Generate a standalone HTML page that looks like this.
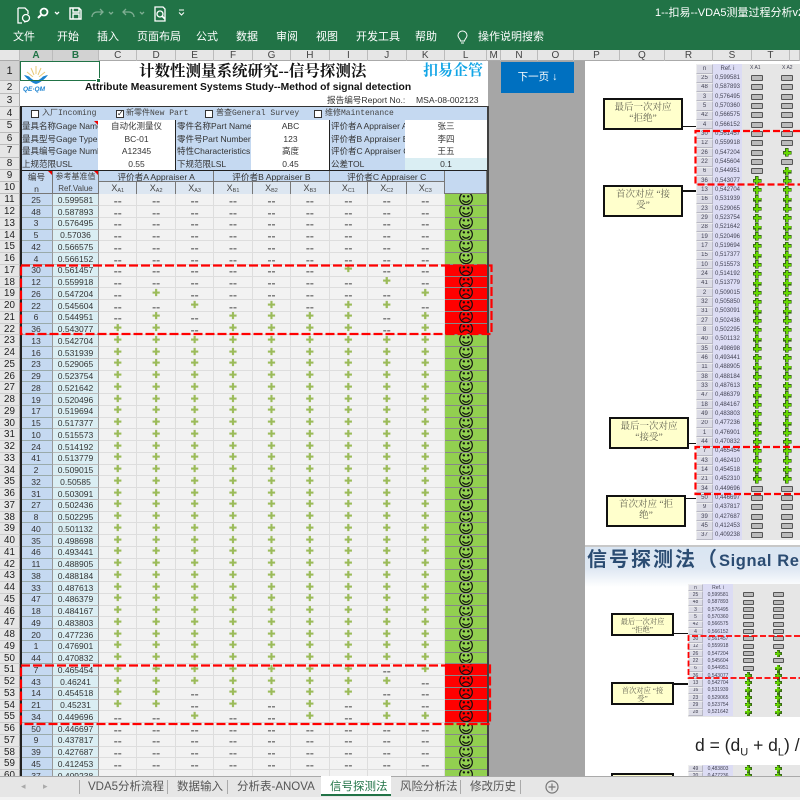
<!DOCTYPE html>
<html lang="zh"><head><meta charset="utf-8"><title>VDA5</title>
<style>
*{box-sizing:border-box;margin:0;padding:0}
html,body{width:800px;height:800px;overflow:hidden;background:#f3f3f3;font-family:"Liberation Sans","Noto Sans CJK SC",sans-serif;color:#333}
.a{position:absolute;white-space:nowrap}
.rb{left:0;top:0;width:800px;height:50px;background:#217346}
.m{top:30px;color:#fff;font-size:11px;line-height:14px}
.ch{left:0;top:50px;width:800px;height:11px;background:#e6e6e6;display:grid;grid-template-columns:20px 33px 46px repeat(9,38.44px) 42.5px 13.5px 37px 36px 46px 45px 48px 39px 38px 10px;border-bottom:1px solid #aaa}
.ch span{font-size:10px;line-height:11px;text-align:center;border-right:1px solid #bbb;color:#444}
.ch .on{background:#d2d2d2;color:#217346;font-weight:bold}
.rh{left:0;width:20px;background:#e6e6e6;border-bottom:1px solid #bbb;border-right:1px solid #aaa;text-align:center;font-size:10px;color:#222;display:flex;align-items:center;justify-content:center}
.d{left:0;top:194.4px;width:488px;height:581.6px;overflow:hidden;display:grid;grid-template-columns:20px 33px 46px repeat(9,38.44px) 42px;grid-auto-rows:11.75px}
.d>*{display:flex;align-items:center;justify-content:center;overflow:hidden;font-style:normal;text-decoration:none;font-weight:normal}
.d s{background:#e6e6e6;border-bottom:1px solid #ccc;border-right:1px solid #aaa;font-size:9.8px;color:#222}
.d u{background:#c5d9f1;border-bottom:1px solid #9aa;border-right:1px solid #999;font-size:8.6px}
.d b{background:#daeef3;border-bottom:1px solid #bbb;border-right:1px solid #999;font-size:8.5px}
.d i,.d em{background:#f2f2f2;border-bottom:1px solid #ddd;border-right:1px solid #ddd}
.d i{font-weight:bold;font-size:12px;color:#7a7a7a;padding-top:2px}
.d em{font-size:9.5px;color:#9bbb59;padding-bottom:1px;font-family:"DejaVu Sans",sans-serif;-webkit-text-stroke:.3px #9bbb59}
.d tt,.d big{font-family:"DejaVu Sans",sans-serif;font-size:15.5px;color:#111;border-bottom:1px solid #888;line-height:11px;-webkit-text-stroke:.2px #111}
.d tt{background:#92d050}.d big{background:#f00}
.sec{font-size:8.5px;line-height:12px;color:#333}
.lb{background:#c5d9f1;height:12.5px;overflow:hidden}
.ck{width:8px;height:8px;background:#fff;border:1px solid #333;top:110px}
.ct{top:108px;font:8px/11px "Liberation Mono","Noto Sans CJK SC",monospace;color:#444}
.hd{background:#c5d9f1;font-size:8.6px;text-align:center;line-height:12px;border-right:1px solid #777;border-bottom:1px solid #777}
.x{background:#dce6f1;top:182px;height:12.4px;width:38.44px;border-right:1px solid #777;text-align:center;font-size:9px;line-height:12px;color:#444}
.x sub{font-size:5.5px;vertical-align:-1px;line-height:0}
.tri{width:0;height:0;border-top:4px solid #e00;border-left:4px solid transparent}
.tb{display:grid;overflow:hidden;background:#e6e6e6;filter:blur(.35px)}
.tb>*{display:flex;align-items:center;justify-content:center;overflow:hidden;font-style:normal;text-decoration:none;font-weight:normal;color:#445}
.tb s{background:#dcdce6;border:1px solid #b8b8c4;border-left-color:#eee;border-top-color:#eee}
.tb u{background:#dcdcf4}
.tb i::after{content:"";display:block;background:#bbb;border:1px solid #555;border-radius:1px}
.t1{left:696px;top:64px;width:104px;height:476px;grid-template-columns:17px 29px 30px 30px;grid-template-rows:9.5px;grid-auto-rows:9.33px;font-size:6px}
.t1>*{font-size:6px}.t1 i::after{width:10px;height:4px}
.t1 em{background:linear-gradient(#66d800,#66d800) center/2px 7px no-repeat,linear-gradient(#66d800,#66d800) center/7px 2px no-repeat,linear-gradient(#3a6a18,#3a6a18) center/3.6px 8.6px no-repeat,linear-gradient(#3a6a18,#3a6a18) center/8.6px 3.6px no-repeat}
.t2,.t3{left:688px;width:112px;grid-template-columns:15px 30px 30px 30px;grid-auto-rows:7.33px}
.t2{top:584px;height:133px;grid-template-rows:7.3px}
.t3{top:765px;height:11px}
.t2>*,.t3>*{font-size:5px}.t2 i::after{width:9px;height:3px}
.t2 em,.t3 em{background:linear-gradient(#66d800,#66d800) center/1.6px 5.6px no-repeat,linear-gradient(#66d800,#66d800) center/5.6px 1.6px no-repeat,linear-gradient(#3a6a18,#3a6a18) center/3px 7px no-repeat,linear-gradient(#3a6a18,#3a6a18) center/7px 3px no-repeat}
.cb{background:#ffffcc;border:2px solid #111;text-align:center;font-family:"Liberation Serif","Noto Serif CJK SC",serif;color:#665;white-space:normal;filter:blur(.25px)}
.cb1{font-size:9.5px;line-height:11px;padding:3px 4px;width:80px;height:32px}
.cb2{font-size:7.3px;line-height:7.5px;padding:3px 2px;width:63px;height:23px}
.ln{background:#111;height:1.5px}
.tab{top:779px;font-size:11.5px;line-height:16px;color:#555}
.sp{top:780px;width:1px;height:14px;background:#aaa}
</style></head><body>

<div class="a rb"></div>
<svg class="a" style="left:0;top:0" width="200" height="28" fill="none" stroke="#fff" stroke-width="1.3">
<path d="M18 8h7l3 3v3M18 8v15h4"/><circle cx="26" cy="18" r="3.5"/><path d="M24 22l4-1"/>
<circle cx="44" cy="12" r="3.5" stroke-width="1.8"/><path d="M41 15l-3 3" stroke-width="2"/><path d="M55 12l2 2 2-2"/>
<path d="M70 8h9l2 2v9H70zM73 8v4h6V8M73 19v-5h6v5" stroke-width="1.4"/>
<g stroke="#7fae93"><path d="M92 17a5 5 0 0 1 5-5h6M100 9l3 3-3 3"/><path d="M134 17a5 5 0 0 0-5-5h-6M126 9l-3 3 3 3"/><path d="M109 12l2 2 2-2M140 12l2 2 2-2"/></g>
<path d="M155 7h8l2 2v12h-10z"/><circle cx="160" cy="14" r="3"/><path d="M162 16l3 3" stroke-width="1.6"/>
<path d="M179 10h5M179 12.500l2.500 2.500 2.500-2.500" stroke-width="1"/>
</svg>
<div class="a" style="left:655px;top:6px;width:145px;overflow:hidden;color:#fff;font-size:11px;line-height:14px">1--扣易--VDA5测量过程分析v2.4.x</div>
<div class="a m" style="left:13px">文件</div><div class="a m" style="left:57px">开始</div><div class="a m" style="left:97px">插入</div><div class="a m" style="left:137px">页面布局</div><div class="a m" style="left:196px">公式</div><div class="a m" style="left:236px">数据</div><div class="a m" style="left:276px">审阅</div><div class="a m" style="left:316px">视图</div><div class="a m" style="left:356px">开发工具</div><div class="a m" style="left:415px">帮助</div>
<svg class="a" style="left:456px;top:30px" width="13" height="15" fill="none" stroke="#fff"><path d="M4.500 11c0-2-2.500-3-2.500-5.500a4.500 4.500 0 0 1 9 0c0 2.500-2.500 3.500-2.500 5.500zM5 13h3"/></svg>
<div class="a m" style="left:478px">操作说明搜索</div>

<div class="a ch"><span></span><span class="on">A</span><span class="on">B</span><span>C</span><span>D</span><span>E</span><span>F</span><span>G</span><span>H</span><span>I</span><span>J</span><span>K</span><span>L</span><span>M</span><span>N</span><span>O</span><span>P</span><span>Q</span><span>R</span><span>S</span><span>T</span><span></span></div>

<div class="a" style="left:20px;top:61px;width:468px;height:46px;background:#fff"></div>
<div class="a" style="left:488px;top:61px;width:97px;height:715px;background:#a6a6a6"></div>
<div class="a" style="left:585px;top:61px;width:215px;height:715px;background:#fff"></div>

<div class="a rh" style="top:61px;height:20px;background:#d2d2d2;font-size:11px">1</div>
<div class="a rh" style="top:81px;height:13px">2</div><div class="a rh" style="top:94px;height:13px">3</div><div class="a rh" style="top:107px;height:13px">4</div><div class="a rh" style="top:120px;height:12.500px">5</div><div class="a rh" style="top:132.500px;height:12.500px">6</div><div class="a rh" style="top:145px;height:12.500px">7</div><div class="a rh" style="top:157.500px;height:12.500px">8</div><div class="a rh" style="top:170px;height:12px">9</div><div class="a rh" style="top:182px;height:12.400px">10</div>

<svg class="a" style="left:22px;top:63px" width="30" height="30" fill="none">
<path d="M14 3v8M9 5l3 7M19 5l-3 7M5 9l6 5M23 9l-6 5" stroke="#e8c878" stroke-width="1"/>
<path d="M2 12c5 1 9 3 12 6 3-3 7-5 12-6-3 4-8 8-12 9-4-1-9-5-12-9z" fill="#1b82d0"/>
<path d="M6 12c4 1 6 3 8 5 2-2 4-4 8-5-2 3-5 5-8 6-3-1-6-3-8-6z" fill="#fff"/>
<text x="1" y="28" font-family="Liberation Sans" font-weight="bold" font-style="italic" font-size="6.500" fill="#1b82d0">QE·QM</text>
</svg>
<div class="a" style="left:19.500px;top:60.500px;width:80px;height:20.500px;border:1.500px solid #217346"></div>
<div class="a" style="left:96px;top:78px;width:5px;height:5px;background:#217346;border:1px solid #fff"></div>

<div class="a" style="left:139px;top:60px;font:bold 15.500px/24px 'Liberation Serif','Noto Serif CJK SC',serif;color:#111">计数性测量系统研究--信号探测法</div>
<div class="a" style="left:85px;top:81px;font-weight:bold;font-size:10.300px;line-height:13px;color:#111">Attribute Measurement Systems Study--Method of signal detection</div>
<div class="a" style="left:423px;top:60px;font:bold 15px/22px 'Liberation Serif','Noto Serif CJK SC',serif;color:#12a5e6">扣易企管</div>
<div class="a" style="left:327px;top:94px;font-size:8.600px;line-height:13px">报告编号Report No.:</div>
<div class="a" style="left:416px;top:94px;font-size:8.600px;line-height:13px">MSA-08-002123</div>

<div class="a" style="left:20px;top:106px;width:468px;height:14.500px;background:#c5d9f1;border-top:1.500px solid #333;border-bottom:1.500px solid #222"></div>
<div class="a ck" style="left:31px"></div><div class="a ct" style="left:42px">入厂Incoming</div>
<div class="a ck" style="left:116px;font:bold 8px/6px 'DejaVu Sans';color:#111;text-align:center">✓</div><div class="a ct" style="left:126px">新零件New Part</div>
<div class="a ck" style="left:205px"></div><div class="a ct" style="left:216px">普查General Survey</div>
<div class="a ck" style="left:314px"></div><div class="a ct" style="left:325px">维修Maintenance</div>

<div class="a" style="left:21px;top:120px;width:466px;height:50px;background:#fff"></div>
<div class="a lb sec" style="left:21px;top:120px;width:77px;padding-left:1px">量具名称Gage Name</div>
<div class="a lb sec" style="left:21px;top:132.500px;width:77px;padding-left:1px">量具型号Gage Type</div>
<div class="a lb sec" style="left:21px;top:145px;width:77px;padding-left:1px">量具编号Gage Number</div>
<div class="a lb sec" style="left:21px;top:157.500px;width:77px;padding-left:1px">上规范限USL</div>
<div class="a sec" style="left:98px;top:120px;width:77px;text-align:center">自动化测量仪</div>
<div class="a sec" style="left:98px;top:132.500px;width:77px;text-align:center">BC-01</div>
<div class="a sec" style="left:98px;top:145px;width:77px;text-align:center">A12345</div>
<div class="a sec" style="left:98px;top:157.500px;width:77px;text-align:center">0.55</div>
<div class="a lb sec" style="left:176px;top:120px;width:75px;padding-left:1px">零件名称Part Name</div>
<div class="a lb sec" style="left:176px;top:132.500px;width:75px;padding-left:1px">零件号Part Number:</div>
<div class="a lb sec" style="left:176px;top:145px;width:75px;padding-left:1px">特性Characteristics</div>
<div class="a lb sec" style="left:176px;top:157.500px;width:75px;padding-left:1px">下规范限LSL</div>
<div class="a sec" style="left:252px;top:120px;width:77px;text-align:center">ABC</div>
<div class="a sec" style="left:252px;top:132.500px;width:77px;text-align:center">123</div>
<div class="a sec" style="left:252px;top:145px;width:77px;text-align:center">高度</div>
<div class="a sec" style="left:252px;top:157.500px;width:77px;text-align:center">0.45</div>
<div class="a lb sec" style="left:330px;top:120px;width:75px;padding-left:1px">评价者A Appraiser A</div>
<div class="a lb sec" style="left:330px;top:132.500px;width:75px;padding-left:1px">评价者B Appraiser B</div>
<div class="a lb sec" style="left:330px;top:145px;width:75px;padding-left:1px">评价者C Appraiser C</div>
<div class="a lb sec" style="left:330px;top:157.500px;width:75px;padding-left:1px">公差TOL</div>
<div class="a sec" style="left:405px;top:120px;width:82px;text-align:center">张三</div>
<div class="a sec" style="left:405px;top:132.500px;width:82px;text-align:center">李四</div>
<div class="a sec" style="left:405px;top:145px;width:82px;text-align:center">王五</div>
<div class="a sec" style="left:405px;top:157.500px;width:82px;height:12.500px;text-align:center;background:#daeef3">0.1</div>
<div class="a" style="left:175px;top:120px;width:1px;height:50px;background:#222"></div>
<div class="a" style="left:329px;top:120px;width:1px;height:50px;background:#222"></div>
<div class="a" style="left:20px;top:169.500px;width:468px;height:1.500px;background:#222"></div>

<div class="a hd" style="left:21px;top:171px;width:32px;height:23.400px">编号<br>n</div>
<div class="a hd" style="left:53px;top:171px;width:46px;height:23.400px;font-size:8px;color:#444">参考基准值<br>Ref.Value</div>
<div class="a hd" style="left:99px;top:171px;width:115.300px;height:11px">评价者A Appraiser A</div>
<div class="a hd" style="left:214.300px;top:171px;width:115.300px;height:11px">评价者B Appraiser B</div>
<div class="a hd" style="left:329.600px;top:171px;width:115.300px;height:11px">评价者C Appraiser C</div>
<div class="a hd" style="left:445px;top:171px;width:42px;height:23.400px"></div>
<div class="a x" style="left:99px">X<sub>A1</sub></div><div class="a x" style="left:137.440px">X<sub>A2</sub></div><div class="a x" style="left:175.880px">X<sub>A3</sub></div><div class="a x" style="left:214.320px">X<sub>B1</sub></div><div class="a x" style="left:252.760px">X<sub>B2</sub></div><div class="a x" style="left:291.200px">X<sub>B3</sub></div><div class="a x" style="left:329.640px">X<sub>C1</sub></div><div class="a x" style="left:368.080px">X<sub>C2</sub></div><div class="a x" style="left:406.520px">X<sub>C3</sub></div>
<div class="a tri" style="left:94px;top:121px"></div><div class="a tri" style="left:48px;top:171px"></div><div class="a tri" style="left:94px;top:171px"></div>

<div class="a d">
<s>11</s><u>25</u><b>0.599581</b><i>--</i><i>--</i><i>--</i><i>--</i><i>--</i><i>--</i><i>--</i><i>--</i><i>--</i><tt>☺</tt>
<s>12</s><u>48</u><b>0.587893</b><i>--</i><i>--</i><i>--</i><i>--</i><i>--</i><i>--</i><i>--</i><i>--</i><i>--</i><tt>☺</tt>
<s>13</s><u>3</u><b>0.576495</b><i>--</i><i>--</i><i>--</i><i>--</i><i>--</i><i>--</i><i>--</i><i>--</i><i>--</i><tt>☺</tt>
<s>14</s><u>5</u><b>0.57036</b><i>--</i><i>--</i><i>--</i><i>--</i><i>--</i><i>--</i><i>--</i><i>--</i><i>--</i><tt>☺</tt>
<s>15</s><u>42</u><b>0.566575</b><i>--</i><i>--</i><i>--</i><i>--</i><i>--</i><i>--</i><i>--</i><i>--</i><i>--</i><tt>☺</tt>
<s>16</s><u>4</u><b>0.566152</b><i>--</i><i>--</i><i>--</i><i>--</i><i>--</i><i>--</i><i>--</i><i>--</i><i>--</i><tt>☺</tt>
<s>17</s><u>30</u><b>0.561457</b><i>--</i><i>--</i><i>--</i><i>--</i><i>--</i><i>--</i><em>✚</em><i>--</i><i>--</i><big>☹</big>
<s>18</s><u>12</u><b>0.559918</b><i>--</i><i>--</i><i>--</i><i>--</i><i>--</i><i>--</i><i>--</i><em>✚</em><i>--</i><big>☹</big>
<s>19</s><u>26</u><b>0.547204</b><i>--</i><em>✚</em><i>--</i><i>--</i><i>--</i><i>--</i><i>--</i><i>--</i><em>✚</em><big>☹</big>
<s>20</s><u>22</u><b>0.545604</b><i>--</i><i>--</i><em>✚</em><i>--</i><em>✚</em><i>--</i><em>✚</em><em>✚</em><i>--</i><big>☹</big>
<s>21</s><u>6</u><b>0.544951</b><i>--</i><em>✚</em><i>--</i><em>✚</em><em>✚</em><em>✚</em><em>✚</em><i>--</i><em>✚</em><big>☹</big>
<s>22</s><u>36</u><b>0.543077</b><em>✚</em><em>✚</em><i>--</i><em>✚</em><em>✚</em><em>✚</em><em>✚</em><i>--</i><em>✚</em><big>☹</big>
<s>23</s><u>13</u><b>0.542704</b><em>✚</em><em>✚</em><em>✚</em><em>✚</em><em>✚</em><em>✚</em><em>✚</em><em>✚</em><em>✚</em><tt>☺</tt>
<s>24</s><u>16</u><b>0.531939</b><em>✚</em><em>✚</em><em>✚</em><em>✚</em><em>✚</em><em>✚</em><em>✚</em><em>✚</em><em>✚</em><tt>☺</tt>
<s>25</s><u>23</u><b>0.529065</b><em>✚</em><em>✚</em><em>✚</em><em>✚</em><em>✚</em><em>✚</em><em>✚</em><em>✚</em><em>✚</em><tt>☺</tt>
<s>26</s><u>29</u><b>0.523754</b><em>✚</em><em>✚</em><em>✚</em><em>✚</em><em>✚</em><em>✚</em><em>✚</em><em>✚</em><em>✚</em><tt>☺</tt>
<s>27</s><u>28</u><b>0.521642</b><em>✚</em><em>✚</em><em>✚</em><em>✚</em><em>✚</em><em>✚</em><em>✚</em><em>✚</em><em>✚</em><tt>☺</tt>
<s>28</s><u>19</u><b>0.520496</b><em>✚</em><em>✚</em><em>✚</em><em>✚</em><em>✚</em><em>✚</em><em>✚</em><em>✚</em><em>✚</em><tt>☺</tt>
<s>29</s><u>17</u><b>0.519694</b><em>✚</em><em>✚</em><em>✚</em><em>✚</em><em>✚</em><em>✚</em><em>✚</em><em>✚</em><em>✚</em><tt>☺</tt>
<s>30</s><u>15</u><b>0.517377</b><em>✚</em><em>✚</em><em>✚</em><em>✚</em><em>✚</em><em>✚</em><em>✚</em><em>✚</em><em>✚</em><tt>☺</tt>
<s>31</s><u>10</u><b>0.515573</b><em>✚</em><em>✚</em><em>✚</em><em>✚</em><em>✚</em><em>✚</em><em>✚</em><em>✚</em><em>✚</em><tt>☺</tt>
<s>32</s><u>24</u><b>0.514192</b><em>✚</em><em>✚</em><em>✚</em><em>✚</em><em>✚</em><em>✚</em><em>✚</em><em>✚</em><em>✚</em><tt>☺</tt>
<s>33</s><u>41</u><b>0.513779</b><em>✚</em><em>✚</em><em>✚</em><em>✚</em><em>✚</em><em>✚</em><em>✚</em><em>✚</em><em>✚</em><tt>☺</tt>
<s>34</s><u>2</u><b>0.509015</b><em>✚</em><em>✚</em><em>✚</em><em>✚</em><em>✚</em><em>✚</em><em>✚</em><em>✚</em><em>✚</em><tt>☺</tt>
<s>35</s><u>32</u><b>0.50585</b><em>✚</em><em>✚</em><em>✚</em><em>✚</em><em>✚</em><em>✚</em><em>✚</em><em>✚</em><em>✚</em><tt>☺</tt>
<s>36</s><u>31</u><b>0.503091</b><em>✚</em><em>✚</em><em>✚</em><em>✚</em><em>✚</em><em>✚</em><em>✚</em><em>✚</em><em>✚</em><tt>☺</tt>
<s>37</s><u>27</u><b>0.502436</b><em>✚</em><em>✚</em><em>✚</em><em>✚</em><em>✚</em><em>✚</em><em>✚</em><em>✚</em><em>✚</em><tt>☺</tt>
<s>38</s><u>8</u><b>0.502295</b><em>✚</em><em>✚</em><em>✚</em><em>✚</em><em>✚</em><em>✚</em><em>✚</em><em>✚</em><em>✚</em><tt>☺</tt>
<s>39</s><u>40</u><b>0.501132</b><em>✚</em><em>✚</em><em>✚</em><em>✚</em><em>✚</em><em>✚</em><em>✚</em><em>✚</em><em>✚</em><tt>☺</tt>
<s>40</s><u>35</u><b>0.498698</b><em>✚</em><em>✚</em><em>✚</em><em>✚</em><em>✚</em><em>✚</em><em>✚</em><em>✚</em><em>✚</em><tt>☺</tt>
<s>41</s><u>46</u><b>0.493441</b><em>✚</em><em>✚</em><em>✚</em><em>✚</em><em>✚</em><em>✚</em><em>✚</em><em>✚</em><em>✚</em><tt>☺</tt>
<s>42</s><u>11</u><b>0.488905</b><em>✚</em><em>✚</em><em>✚</em><em>✚</em><em>✚</em><em>✚</em><em>✚</em><em>✚</em><em>✚</em><tt>☺</tt>
<s>43</s><u>38</u><b>0.488184</b><em>✚</em><em>✚</em><em>✚</em><em>✚</em><em>✚</em><em>✚</em><em>✚</em><em>✚</em><em>✚</em><tt>☺</tt>
<s>44</s><u>33</u><b>0.487613</b><em>✚</em><em>✚</em><em>✚</em><em>✚</em><em>✚</em><em>✚</em><em>✚</em><em>✚</em><em>✚</em><tt>☺</tt>
<s>45</s><u>47</u><b>0.486379</b><em>✚</em><em>✚</em><em>✚</em><em>✚</em><em>✚</em><em>✚</em><em>✚</em><em>✚</em><em>✚</em><tt>☺</tt>
<s>46</s><u>18</u><b>0.484167</b><em>✚</em><em>✚</em><em>✚</em><em>✚</em><em>✚</em><em>✚</em><em>✚</em><em>✚</em><em>✚</em><tt>☺</tt>
<s>47</s><u>49</u><b>0.483803</b><em>✚</em><em>✚</em><em>✚</em><em>✚</em><em>✚</em><em>✚</em><em>✚</em><em>✚</em><em>✚</em><tt>☺</tt>
<s>48</s><u>20</u><b>0.477236</b><em>✚</em><em>✚</em><em>✚</em><em>✚</em><em>✚</em><em>✚</em><em>✚</em><em>✚</em><em>✚</em><tt>☺</tt>
<s>49</s><u>1</u><b>0.476901</b><em>✚</em><em>✚</em><em>✚</em><em>✚</em><em>✚</em><em>✚</em><em>✚</em><em>✚</em><em>✚</em><tt>☺</tt>
<s>50</s><u>44</u><b>0.470832</b><em>✚</em><em>✚</em><em>✚</em><em>✚</em><em>✚</em><em>✚</em><em>✚</em><em>✚</em><em>✚</em><tt>☺</tt>
<s>51</s><u>7</u><b>0.465454</b><em>✚</em><em>✚</em><em>✚</em><em>✚</em><em>✚</em><em>✚</em><em>✚</em><i>--</i><em>✚</em><big>☹</big>
<s>52</s><u>43</u><b>0.46241</b><em>✚</em><em>✚</em><em>✚</em><em>✚</em><em>✚</em><em>✚</em><em>✚</em><em>✚</em><i>--</i><big>☹</big>
<s>53</s><u>14</u><b>0.454518</b><em>✚</em><em>✚</em><i>--</i><em>✚</em><em>✚</em><em>✚</em><em>✚</em><i>--</i><i>--</i><big>☹</big>
<s>54</s><u>21</u><b>0.45231</b><em>✚</em><em>✚</em><i>--</i><em>✚</em><i>--</i><em>✚</em><i>--</i><em>✚</em><i>--</i><big>☹</big>
<s>55</s><u>34</u><b>0.449696</b><i>--</i><i>--</i><em>✚</em><i>--</i><i>--</i><em>✚</em><i>--</i><em>✚</em><em>✚</em><big>☹</big>
<s>56</s><u>50</u><b>0.446697</b><i>--</i><i>--</i><i>--</i><i>--</i><i>--</i><i>--</i><i>--</i><i>--</i><i>--</i><tt>☺</tt>
<s>57</s><u>9</u><b>0.437817</b><i>--</i><i>--</i><i>--</i><i>--</i><i>--</i><i>--</i><i>--</i><i>--</i><i>--</i><tt>☺</tt>
<s>58</s><u>39</u><b>0.427687</b><i>--</i><i>--</i><i>--</i><i>--</i><i>--</i><i>--</i><i>--</i><i>--</i><i>--</i><tt>☺</tt>
<s>59</s><u>45</u><b>0.412453</b><i>--</i><i>--</i><i>--</i><i>--</i><i>--</i><i>--</i><i>--</i><i>--</i><i>--</i><tt>☺</tt>
<s>60</s><u>37</u><b>0.409238</b><i>--</i><i>--</i><i>--</i><i>--</i><i>--</i><i>--</i><i>--</i><i>--</i><i>--</i><tt>☺</tt>
</div>
<div class="a" style="left:20px;top:106px;width:1.500px;height:670px;background:#222"></div>
<div class="a" style="left:486.500px;top:106px;width:2px;height:670px;background:#404040"></div>

<div class="a" style="left:501px;top:62px;width:73px;height:31px;background:#0070c0;color:#fff;font-size:10.500px;line-height:31px;text-align:center">下一页 ↓</div>

<!-- right-hand picture -->
<div class="a tb t1">
<s>n</s><u>Ref. i</u><p></p><p></p>
<s>25</s><u>0,599581</u><i></i><i></i><s>48</s><u>0,587893</u><i></i><i></i><s>3</s><u>0,576495</u><i></i><i></i><s>5</s><u>0,570360</u><i></i><i></i><s>42</s><u>0,566575</u><i></i><i></i><s>4</s><u>0,566152</u><i></i><i></i><s>30</s><u>0,561457</u><i></i><i></i><s>12</s><u>0,559918</u><i></i><i></i><s>26</s><u>0,547204</u><i></i><em></em><s>22</s><u>0,545604</u><i></i><i></i><s>6</s><u>0,544951</u><i></i><em></em><s>36</s><u>0,543077</u><em></em><em></em>
<s>13</s><u>0,542704</u><em></em><em></em><s>16</s><u>0,531939</u><em></em><em></em><s>23</s><u>0,529065</u><em></em><em></em><s>29</s><u>0,523754</u><em></em><em></em><s>28</s><u>0,521642</u><em></em><em></em><s>19</s><u>0,520496</u><em></em><em></em><s>17</s><u>0,519694</u><em></em><em></em><s>15</s><u>0,517377</u><em></em><em></em><s>10</s><u>0,515573</u><em></em><em></em><s>24</s><u>0,514192</u><em></em><em></em><s>41</s><u>0,513779</u><em></em><em></em><s>2</s><u>0,509015</u><em></em><em></em><s>32</s><u>0,505850</u><em></em><em></em><s>31</s><u>0,503091</u><em></em><em></em><s>27</s><u>0,502436</u><em></em><em></em><s>8</s><u>0,502295</u><em></em><em></em><s>40</s><u>0,501132</u><em></em><em></em><s>35</s><u>0,498698</u><em></em><em></em><s>46</s><u>0,493441</u><em></em><em></em><s>11</s><u>0,488905</u><em></em><em></em><s>38</s><u>0,488184</u><em></em><em></em><s>33</s><u>0,487613</u><em></em><em></em><s>47</s><u>0,486379</u><em></em><em></em><s>18</s><u>0,484167</u><em></em><em></em><s>49</s><u>0,483803</u><em></em><em></em><s>20</s><u>0,477236</u><em></em><em></em><s>1</s><u>0,476901</u><em></em><em></em><s>44</s><u>0,470832</u><em></em><em></em><s>7</s><u>0,465454</u><em></em><em></em><s>43</s><u>0,462410</u><em></em><em></em><s>14</s><u>0,454518</u><em></em><em></em><s>21</s><u>0,452310</u><em></em><em></em>
<s>34</s><u>0,449696</u><i></i><i></i><s>50</s><u>0,446697</u><i></i><i></i><s>9</s><u>0,437817</u><i></i><i></i><s>39</s><u>0,427687</u><i></i><i></i><s>45</s><u>0,412453</u><i></i><i></i><s>37</s><u>0,409238</u><i></i><i></i>
</div>
<div class="a" style="left:750px;top:64px;font-size:5px;line-height:9px;color:#445;filter:blur(.3px)">X A1</div><div class="a" style="left:782px;top:64px;font-size:5px;line-height:9px;color:#445;filter:blur(.3px)">X A2</div>

<div class="a ln" style="left:683px;top:125.500px;width:13px"></div>
<div class="a ln" style="left:683px;top:190px;width:13px"></div>
<div class="a ln" style="left:689px;top:442.500px;width:7px"></div>
<div class="a ln" style="left:686px;top:497.500px;width:10px"></div>
<div class="a cb cb1" style="left:603px;top:98px">最后一次对应<br>“拒绝”</div>
<div class="a cb cb1" style="left:603px;top:185px">首次对应 “接<br>受”</div>
<div class="a cb cb1" style="left:609px;top:417px">最后一次对应<br>“接受”</div>
<div class="a cb cb1" style="left:606px;top:495px">首次对应 “拒<br>绝”</div>

<div class="a" style="left:585px;top:545px;width:215px;height:42px;background:linear-gradient(#d9e5f2 0,#dfe8f3 55%,#fff 100%);border-top:2px solid #c8c8c8"></div>
<div class="a" style="left:587px;top:547px;width:213px;overflow:hidden;font:bold 20px/26px 'Liberation Sans','Noto Sans CJK SC',sans-serif;color:#2b4c72;letter-spacing:2px">信号探测法（<span style="font-size:16.500px;letter-spacing:.6px">Signal Response</span></div>

<div class="a tb t2">
<s>n</s><u>Ref. i</u><p></p><p></p>
<s>25</s><u>0,599581</u><i></i><i></i><s>48</s><u>0,587893</u><i></i><i></i><s>3</s><u>0,576495</u><i></i><i></i><s>5</s><u>0,570360</u><i></i><i></i><s>42</s><u>0,566575</u><i></i><i></i><s>4</s><u>0,566152</u><i></i><i></i><s>30</s><u>0,561457</u><i></i><i></i><s>12</s><u>0,559918</u><i></i><i></i><s>26</s><u>0,547204</u><i></i><em></em><s>22</s><u>0,545604</u><i></i><i></i><s>6</s><u>0,544951</u><i></i><em></em><s>36</s><u>0,543077</u><em></em><em></em><s>13</s><u>0,542704</u><em></em><em></em><s>16</s><u>0,531939</u><em></em><em></em><s>23</s><u>0,529065</u><em></em><em></em><s>29</s><u>0,523754</u><em></em><em></em><s>28</s><u>0,521642</u><em></em><em></em>
</div>
<div class="a ln" style="left:674px;top:632.500px;width:14px"></div>
<div class="a ln" style="left:674px;top:683px;width:14px"></div>
<div class="a cb cb2" style="left:611px;top:613px">最后一次对应<br>“拒绝”</div>
<div class="a cb cb2" style="left:611px;top:682px">首次对应 “接<br>受”</div>
<div class="a" style="left:695px;top:733px;width:105px;overflow:hidden;font-size:17.500px;line-height:24px;color:#222">d = (d<sub style="font-size:11px;line-height:0">U</sub> + d<sub style="font-size:11px;line-height:0">L</sub>) / 2</div>
<div class="a tb t3"><s>49</s><u>0,483803</u><em></em><em></em><s>20</s><u>0,477236</u><em></em><em></em></div>
<div class="a" style="left:611px;top:773px;width:63px;height:3px;background:#ffffcc;border:2px solid #111;border-bottom:0"></div>

<svg class="a" style="left:0;top:0" width="800" height="776" fill="none" stroke="#f00">
<g stroke-width="2.200" stroke-dasharray="9 3"><path d="M21 265.500H491.500V334H21z"/><path d="M21 665.500H490V724H21z"/></g>
<g stroke-width="2.200" stroke-dasharray="7 3"><path d="M800 131H695.500V184.500H800"/><path d="M800 447H695.500V494H800"/></g>
<g stroke-width="1.800" stroke-dasharray="6 2.500"><path d="M800 636H688.500V678H800"/></g>
</svg>

<div class="a" style="left:0;top:776px;width:800px;height:21px;background:#e6e6e6;border-top:1px solid #aaa"></div>
<div class="a" style="left:321px;top:776px;width:70px;height:20px;background:#fff;border-bottom:2px solid #217346"></div>
<div class="a sp" style="left:79px"></div><div class="a sp" style="left:167px"></div><div class="a sp" style="left:227px"></div><div class="a sp" style="left:460px"></div><div class="a sp" style="left:520px"></div>
<div class="a" style="left:21px;top:781px;font-size:9px;line-height:11px;color:#aaa">◂</div><div class="a" style="left:43px;top:781px;font-size:9px;line-height:11px;color:#aaa">▸</div>
<div class="a tab" style="left:88px">VDA5分析流程</div><div class="a tab" style="left:177px">数据输入</div><div class="a tab" style="left:237px">分析表-ANOVA</div><div class="a tab" style="left:330px;color:#217346">信号探测法</div><div class="a tab" style="left:400px">风险分析法</div><div class="a tab" style="left:470px">修改历史</div>
<svg class="a" style="left:545px;top:780px" width="14" height="14" fill="none" stroke="#777" stroke-width="1.200"><circle cx="7" cy="7" r="6"/><path d="M7 3.500v7M3.500 7h7"/></svg>
</body></html>
